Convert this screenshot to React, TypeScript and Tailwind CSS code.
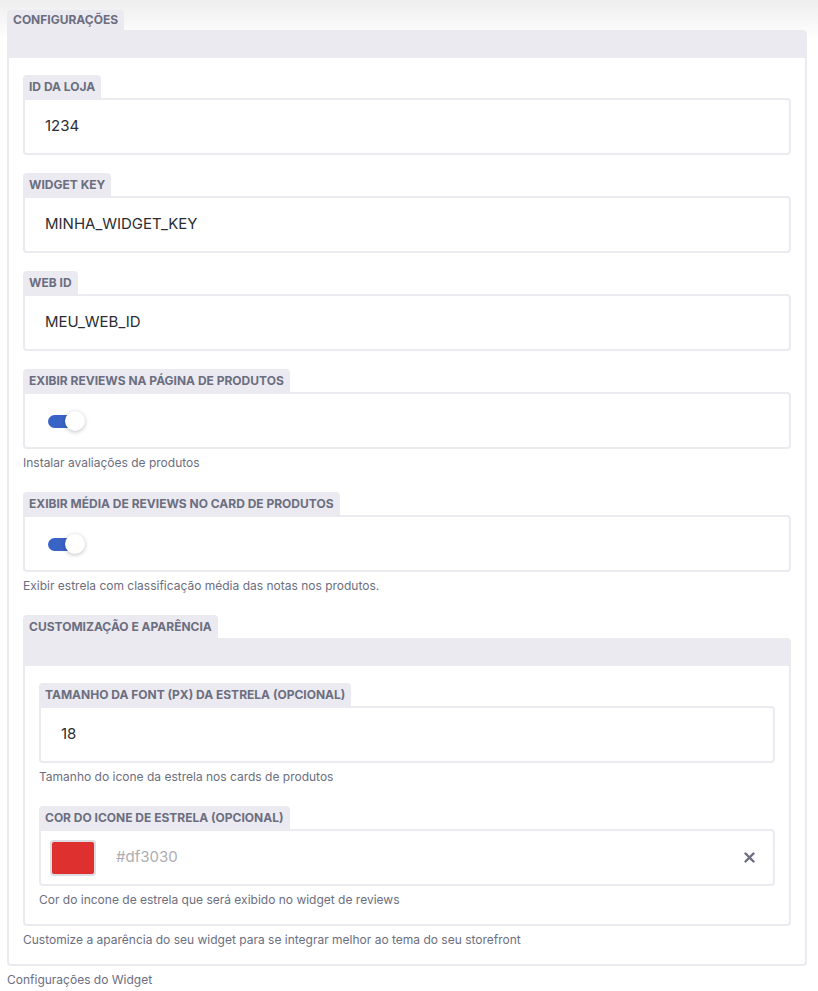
import type { ReactNode } from "react";

const tabCls =
  "inline-flex items-center rounded-t-[4px] bg-[#ebeaf1] px-[6px] text-[12px] font-bold leading-none text-[#6b6e7f]";

function Help({ children }: { children: ReactNode }) {
  return <p className="h-[25px] pt-[6px] text-[12px] leading-[15px] text-[#6b6e7f]">{children}</p>;
}

function Field({ label, help, children }: { label: string; help?: string; children: ReactNode }) {
  return (
    <div>
      <div className="flex">
        <span className={`${tabCls} h-[23px]`}>{label}</span>
      </div>
      <div className="flex h-[57px] items-center rounded-b-[4px] rounded-tr-[4px] border-2 border-[#ebeaf1] bg-white">
        {children}
      </div>
      {help && <Help>{help}</Help>}
    </div>
  );
}

function Panel({ title, tall, help, children }: { title: string; tall?: boolean; help: string; children: ReactNode }) {
  return (
    <div>
      <div className="flex">
        <span className={`${tabCls} ${tall ? "h-[23px]" : "h-[20px]"}`}>{title}</span>
      </div>
      <div className="h-[28px] rounded-tr-[4px] bg-[#ebeaf1]" />
      <div className="flex flex-col gap-[18px] rounded-b-[4px] border-2 border-t-0 border-[#ebeaf1] px-[14px] pt-[17px] pb-[13px]">
        {children}
      </div>
      <Help>{help}</Help>
    </div>
  );
}

function TextValue({ value }: { value: string }) {
  return <span className="pl-[20px] text-[15px] text-[#2b2d33]">{value}</span>;
}

function Toggle() {
  return (
    <div className="relative ml-[23px] h-[20px] w-[37px]">
      <div className="absolute left-0 top-[4px] h-[13px] w-[30px] rounded-full bg-[#3a63c6]" />
      <div className="absolute right-0 top-0 h-[20px] w-[20px] rounded-full bg-white shadow-[0_1px_4px_rgba(0,0,0,0.25)]" />
    </div>
  );
}

export default function App() {
  return (
    <div
      className="min-h-[991px] bg-[linear-gradient(to_bottom,#eeeeee_0px,#ffffff_40px)] px-[7px] pt-[10px]"
      style={{ fontFamily: "Inter, 'Noto Sans', sans-serif" }}
    >
      <div className="w-[800px]">
        <Panel title="CONFIGURAÇÕES" help="Configurações do Widget">
          <Field label="ID DA LOJA">
            <TextValue value="1234" />
          </Field>
          <Field label="WIDGET KEY">
            <TextValue value="MINHA_WIDGET_KEY" />
          </Field>
          <Field label="WEB ID">
            <TextValue value="MEU_WEB_ID" />
          </Field>
          <Field label="EXIBIR REVIEWS NA PÁGINA DE PRODUTOS" help="Instalar avaliações de produtos">
            <Toggle />
          </Field>
          <Field
            label="EXIBIR MÉDIA DE REVIEWS NO CARD DE PRODUTOS"
            help="Exibir estrela com classificação média das notas nos produtos."
          >
            <Toggle />
          </Field>

          <Panel
            title="CUSTOMIZAÇÃO E APARÊNCIA"
            tall
            help="Customize a aparência do seu widget para se integrar melhor ao tema do seu storefront"
          >
            <Field
              label="TAMANHO DA FONT (PX) DA ESTRELA (OPCIONAL)"
              help="Tamanho do icone da estrela nos cards de produtos"
            >
              <TextValue value="18" />
            </Field>
            <Field
              label="COR DO ICONE DE ESTRELA (OPCIONAL)"
              help="Cor do incone de estrela que será exibido no widget de reviews"
            >
              <div className="ml-[9px] h-[36px] w-[46px] rounded-[4px] border-2 border-[#dcdce1] bg-[#df3030]" />
              <span className="ml-[20px] flex-1 text-[15px] text-[#adadb3]">#df3030</span>
              <svg className="mr-[18px]" width="11" height="11" viewBox="0 0 11 11">
                <path d="M1.5 1.5 L9.5 9.5 M9.5 1.5 L1.5 9.5" stroke="#6b6e7f" strokeWidth="2.4" strokeLinecap="round" />
              </svg>
            </Field>
          </Panel>
        </Panel>
      </div>
    </div>
  );
}
